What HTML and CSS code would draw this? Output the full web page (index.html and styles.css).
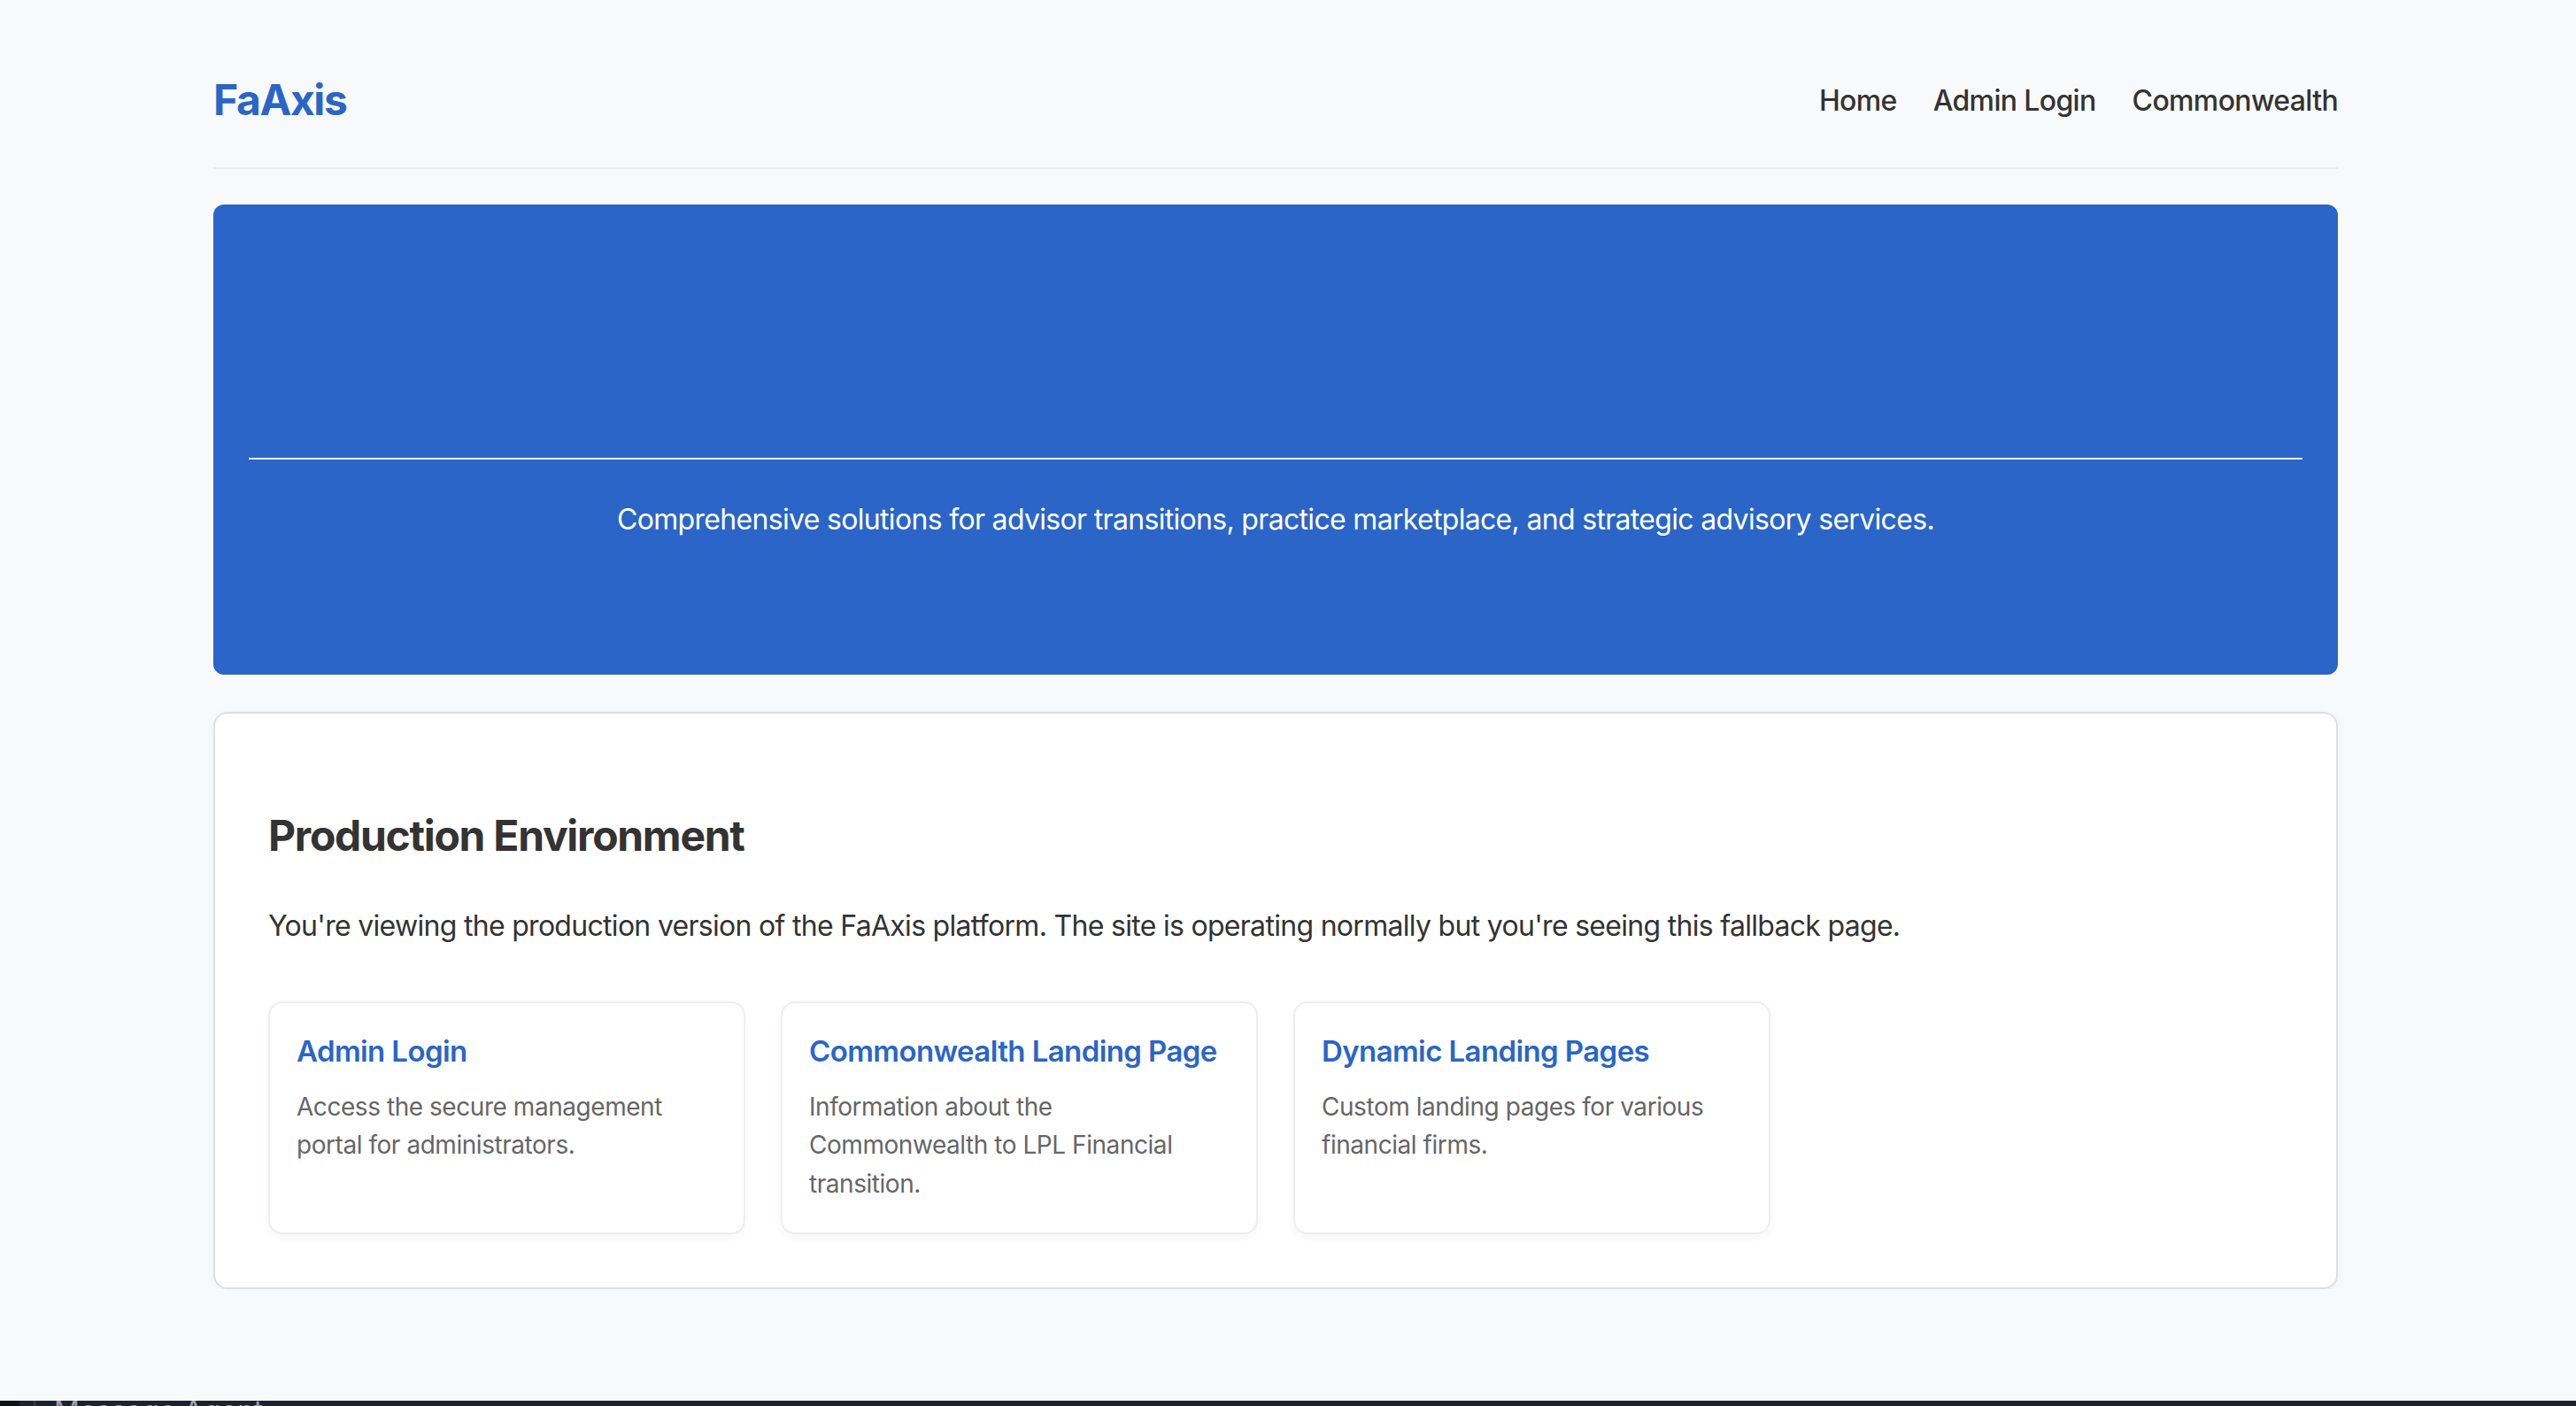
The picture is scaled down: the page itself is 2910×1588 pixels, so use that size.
FILE: index.html
```html
<!DOCTYPE html>
<html lang="en">
<head>
<meta charset="utf-8">
<title>FaAxis</title>
<link rel="stylesheet" href="styles.css">
</head>
<body>
<div class="page">
  <header class="site-header">
    <a class="logo" href="#">FaAxis</a>
    <nav class="nav">
      <a href="#">Home</a>
      <a href="#">Admin Login</a>
      <a href="#">Commonwealth</a>
    </nav>
  </header>

  <section class="hero">
    <hr class="hero-rule">
    <p class="hero-text">Comprehensive solutions for advisor transitions, practice marketplace, and strategic advisory services.</p>
  </section>

  <main class="panel">
    <h2 class="panel-title">Production Environment</h2>
    <p class="panel-text">You're viewing the production version of the FaAxis platform. The site is operating normally but you're seeing this fallback page.</p>
    <div class="cards">
      <div class="card">
        <h3 class="card-title">Admin Login</h3>
        <p class="card-text">Access the secure management portal for administrators.</p>
      </div>
      <div class="card">
        <h3 class="card-title">Commonwealth Landing Page</h3>
        <p class="card-text">Information about the Commonwealth to LPL Financial transition.</p>
      </div>
      <div class="card">
        <h3 class="card-title">Dynamic Landing Pages</h3>
        <p class="card-text">Custom landing pages for various financial firms.</p>
      </div>
    </div>
  </main>
</div>

<div class="agent-bar">
  <span class="agent-dark"></span>
  <span class="agent-line"></span>
  <span class="agent-text">Message Agent...</span>
</div>
</body>
</html>
```

FILE: styles.css
```css
* { box-sizing: border-box; }

html, body {
  margin: 0;
  padding: 0;
}

body {
  background: #f8f9fa;
  font-family: Inter, "Noto Sans", "Liberation Sans", sans-serif;
  color: #333;
}

.page {
  width: 2400px;
  margin: 0 0 0 241px;
}

.site-header {
  display: flex;
  align-items: center;
  justify-content: space-between;
  padding: 84px 0 47px;
  border-bottom: 2px solid #eaecef;
  margin-bottom: 40px;
}

.logo {
  font-size: 48px;
  font-weight: 700;
  color: #2a65c7;
  text-decoration: none;
  letter-spacing: -1.4px;
  line-height: 1.21;
}

.nav {
  display: flex;
  gap: 41px;
}

.nav a {
  font-size: 32px;
  font-weight: 500;
  color: #333;
  text-decoration: none;
  letter-spacing: -0.65px;
}

.hero {
  background: #2a65c7;
  border-radius: 12px;
  height: 531px;
  padding: 286px 40px 0;
  color: #fff;
  text-align: center;
}

.hero-rule {
  margin: 0;
  border: 0;
  height: 2px;
  background: rgba(255, 255, 255, 0.92);
}

.hero-text {
  margin: 39px 0 0;
  font-size: 32px;
  line-height: 57.6px;
  letter-spacing: -0.68px;
}

.panel {
  margin-top: 42px;
  background: #fff;
  border: 2px solid #dedfe1;
  border-radius: 16px;
  box-shadow: 0 2px 10px rgba(0, 0, 0, 0.04);
  padding: 109px 60px 60px;
}

.panel-title {
  margin: 0;
  font-size: 48px;
  line-height: 57.6px;
  font-weight: 700;
  color: #333;
  letter-spacing: -1.3px;
}

.panel-text {
  margin: 47px 0 0;
  font-size: 32px;
  line-height: 51.2px;
  letter-spacing: -0.7px;
}

.cards {
  margin-top: 60px;
  display: grid;
  grid-template-columns: repeat(4, 1fr);
  gap: 40px;
}

.card {
  background: #fff;
  border: 2px solid #eeeeee;
  border-radius: 16px;
  box-shadow: 0 4px 10px rgba(0, 0, 0, 0.04);
  padding: 30px 30px 33px;
}

.card-title {
  margin: 3px 0 21px;
  font-size: 33px;
  line-height: 42px;
  font-weight: 600;
  color: #2a65c7;
  letter-spacing: -0.6px;
}

.card-text {
  margin: 0;
  font-size: 28px;
  line-height: 43.4px;
  color: #666;
  letter-spacing: -0.45px;
}

.agent-bar {
  position: fixed;
  left: 0;
  right: 0;
  bottom: 0;
  height: 6px;
  background: #1e2230;
  overflow: hidden;
  display: flex;
  align-items: flex-start;
}

.agent-dark {
  width: 22px;
  height: 6px;
  background: #0e1118;
}

.agent-line {
  width: 2px;
  height: 6px;
  margin-left: 16px;
  background: #3a3f4c;
}

.agent-text {
  margin: -4px 0 0 21px;
  font-size: 32px;
  line-height: 32px;
  color: #9aa0aa;
  white-space: nowrap;
}
```
